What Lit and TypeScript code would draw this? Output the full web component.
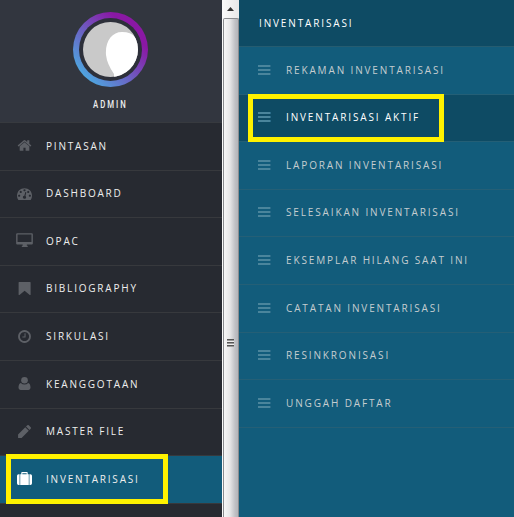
import { LitElement, html, css, svg } from "lit";
import { customElement } from "lit/decorators.js";

const icons: Record<string, unknown> = {
  home: svg`<g transform="scale(.0078125)"><path d="M1472 992v480q0 26-19 45t-45 19h-384v-384h-256v384h-384q-26 0-45-19t-19-45v-480q0-1 .5-3t.5-3l575-474 575 474q1 2 1 6zm223-69l-62 74q-8 9-21 11h-3q-13 0-21-7l-692-577-692 577q-12 8-24 7-13-2-21-11l-62-74q-8-10-7-23.5t11-21.5l719-599q32-26 76-26t76 26l244 204v-195q0-14 9-23t23-9h192q14 0 23 9t9 23v408l219 182q10 8 11 21.5t-7 23.5z"/></g>`,
  gauge: svg`<g transform="scale(.0078125)"><path d="M384 1152q0-53-37.5-90.5t-90.5-37.5-90.5 37.5-37.5 90.5 37.5 90.5 90.5 37.5 90.5-37.5 37.5-90.5zm192-448q0-53-37.5-90.5t-90.5-37.5-90.5 37.5-37.5 90.5 37.5 90.5 90.5 37.5 90.5-37.5 37.5-90.5zm428 481l101-382q6-26-7.5-48.5t-38.5-29.5-48 6.5-30 39.5l-101 382q-60 5-107 43.5t-63 98.5q-20 77 20 146t117 89 146-20 89-117q16-60-6-117t-72-91zm660-33q0-53-37.5-90.5t-90.5-37.5-90.5 37.5-37.5 90.5 37.5 90.5 90.5 37.5 90.5-37.5 37.5-90.5zm-640-640q0-53-37.5-90.5t-90.5-37.5-90.5 37.5-37.5 90.5 37.5 90.5 90.5 37.5 90.5-37.5 37.5-90.5zm448 192q0-53-37.5-90.5t-90.5-37.5-90.5 37.5-37.5 90.5 37.5 90.5 90.5 37.5 90.5-37.5 37.5-90.5zm320 448q0 261-141 483-19 29-54 29h-1402q-35 0-54-29-141-221-141-483 0-182 71-348t191-286 286-191 348-71 348 71 286 191 191 286 71 348z"/></g>`,
  desktop: svg`<path fill-rule="evenodd" d="M.2.200H13.800q1 0 1 1V9.700q0 1-1 1H9.200V11.800H10V13H4.500V11.800H5.300V10.700H.2q-1 0-1-1V1.200q0-1 1-1ZM.5 1.400V8.500H13.500V1.400Z"/>`,
  bookmark: svg`<path d="M1.900 1H12.200q.5 0 .5.500V12.600q0 .8-.8.500L7.100 9.200 2.300 13.100q-.8.300-.8-.5V1.500q0-.5.4-.5Z"/>`,
  clock: svg`<g transform="scale(.0078125)"><path d="M1024 544v448q0 14-9 23t-23 9h-320q-14 0-23-9t-9-23v-64q0-14 9-23t23-9h224v-352q0-14 9-23t23-9h64q14 0 23 9t9 23zm416 352q0-148-73-273t-198-198-273-73-273 73-198 198-73 273 73 273 198 198 273 73 273-73 198-198 73-273zm224 0q0 209-103 385.5t-279.5 279.5-385.5 103-385.5-103-279.5-279.5-103-385.5 103-385.5 279.5-279.5 385.5-103 385.5 103 279.5 279.5 103 385.5z"/></g>`,
  user: svg`<circle cx="7" cy="4" r="3.100"/><path d="M3.600 6.500Q5 8 7 8T10.400 6.500Q12.600 7 12.600 11 12.600 13 10.700 13H3.300Q1.400 13 1.400 11 1.400 7 3.600 6.500Z"/>`,
  pencil: svg`<path d="M1 13V9.700L7.700 3 11 6.300 4.300 13ZM8.400 2.300 9.600 1.200Q10.300.6 11 1.200L12.800 3Q13.400 3.700 12.800 4.400L11.700 5.600Z"/>`,
  suitcase: svg`<path fill-rule="evenodd" d="M4 3V1.700Q4 1 4.700 1H9.300Q10 1 10 1.700V3H11V13H3V3ZM5 2V3H9V2ZM2.400 3V13H1.500Q0 13 0 11.500V4.500Q0 3 1.500 3ZM11.600 3H12.500Q14 3 14 4.500V11.500Q14 13 12.500 13H11.600Z"/>`,
};

const modules = [
  ["home", "PINTASAN"],
  ["gauge", "DASHBOARD"],
  ["desktop", "OPAC"],
  ["bookmark", "BIBLIOGRAPHY"],
  ["clock", "SIRKULASI"],
  ["user", "KEANGGOTAAN"],
  ["pencil", "MASTER FILE"],
  ["suitcase", "INVENTARISASI"],
];

const entries = [
  "REKAMAN INVENTARISASI",
  "INVENTARISASI AKTIF",
  "LAPORAN INVENTARISASI",
  "SELESAIKAN INVENTARISASI",
  "EKSEMPLAR HILANG SAAT INI",
  "CATATAN INVENTARISASI",
  "RESINKRONISASI",
  "UNGGAH DAFTAR",
];

@customElement("app-root")
export class AppRoot extends LitElement {
  static styles = css`
    :host {
      display: flex;
      position: relative;
      width: 514px;
      height: 517px;
      overflow: hidden;
      font: 10px/16px "Open Sans", "Noto Sans", sans-serif;
      letter-spacing: 1.860px;
      white-space: nowrap;
    }
    * { box-sizing: border-box; }
    .side { width: 222px; background: #272a31; color: #eee; letter-spacing: 1.800px; }
    .profile {
      height: 123px;
      background: #32363f;
      border-bottom: 1px solid #373a3f;
      display: flex;
      flex-direction: column;
      align-items: center;
      padding: 12px 2px 0 0;
    }
    .avatar {
      width: 75px;
      height: 75px;
      border-radius: 50%;
      background: linear-gradient(45deg, #4ab0e4 10%, #8a18a4 75%);
      padding: 6px;
      display: flex;
    }
    .avatar svg { width: 63px; height: 63px; }
    .name {
      margin-top: 10px;
      font: 500 10px/16px Roboto, sans-serif;
      letter-spacing: 2.600px;
      transform: scaleX(.78);
    }
    .row {
      height: 47.620px;
      display: flex;
      align-items: center;
      padding: 0 0 1.400px 16.500px;
      border-bottom: 1px solid #37393d;
      gap: 14.500px;
    }
    .icon {
      width: 15px;
      height: 15px;
      overflow: visible;
      fill: #5d6066;
      flex: none;
    }
    .side .active { background: #125c7b; }
    .side .active .icon { fill: #fff; }
    .bar {
      width: 17px;
      background: linear-gradient(90deg, #fafafa, #e8e8e8);
      display: flex;
      flex-direction: column;
      align-items: center;
    }
    .arrow { height: 18px; width: 8px; padding-top: 7px; }
    .arrow svg { display: block; width: 7px; height: 4px; }
    .thumb {
      width: 16px;
      flex: 1;
      border: 1px solid #8a8c8f;
      border-bottom: 0;
      border-radius: 2px 2px 0 0;
      background: linear-gradient(90deg, #f7f7f7, #e8e8e9 40%, #bfc0c4 80%, #b4b5ba);
      display: flex;
      justify-content: center;
      padding-top: 320px;
    }
    .grip { width: 7px; height: 8px; background: repeating-linear-gradient(#555 0 1px, #999 1px 2px, #eee 2px 3px); }
    .panel { flex: 1; background: #125c7b; color: #c5cdd0; }
    .title {
      height: 47px;
      padding: 15px 20px;
      background: #0e4b64;
      color: #fff;
      border-bottom: 1px solid #255c70;
    }
    .panel .row { padding-left: 19px; gap: 15px; border-color: #245f76; }
    .bars { width: 13px; display: flex; flex-direction: column; gap: 2px; }
    .bars i { height: 2px; background: linear-gradient(90deg, #4a859c 12px, #2a6b88 12px); }
    .panel .active { background: #0e4b64; color: #fff; }
    .mark { position: absolute; border: 5px solid #fff200; }
    .mark-module { left: 6px; top: 454px; width: 162px; height: 50px; }
    .mark-entry { left: 248px; top: 94px; width: 196px; height: 48px; }
  `;

  private module(icon: string, label: string, active: boolean) {
    return html`<div class="row ${active ? "active" : ""}">
      <svg class="icon" viewBox="0 0 14 14">${icons[icon]}</svg><span>${label}</span>
    </div>`;
  }

  private entry(label: string, active: boolean) {
    return html`<div class="row ${active ? "active" : ""}">
      <div class="bars"><i></i><i></i><i></i></div><span>${label}</span>
    </div>`;
  }

  render() {
    return html`
      <nav class="side">
        <div class="profile">
          <div class="avatar">
            <svg viewBox="0 0 63 63">
              <defs><clipPath id="face"><circle cx="31.500" cy="31.500" r="27.500" /></clipPath></defs>
              <circle cx="31.500" cy="31.500" r="31.500" fill="#2d303a" />
              <g clip-path="url(#face)">
                <rect width="63" height="63" fill="#c9c9c9" />
                <path d="M35 63V56Q28 46 27 37C26 23 33 14 43 14Q52 14 56 19L63 30V63Z" fill="#fff" />
              </g>
            </svg>
          </div>
          <div class="name">ADMIN</div>
        </div>
        ${modules.map(([icon, label], i) => this.module(icon, label, i === 7))}
      </nav>
      <div class="bar">
        <div class="arrow"><svg viewBox="0 0 7 4"><path d="M0 4 3.500 0 7 4Z" fill="#333" /></svg></div>
        <div class="thumb"><div class="grip"></div></div>
      </div>
      <section class="panel">
        <div class="title">INVENTARISASI</div>
        ${entries.map((label, i) => this.entry(label, i === 1))}
      </section>
      <div class="mark mark-module"></div>
      <div class="mark mark-entry"></div>
    `;
  }
}
